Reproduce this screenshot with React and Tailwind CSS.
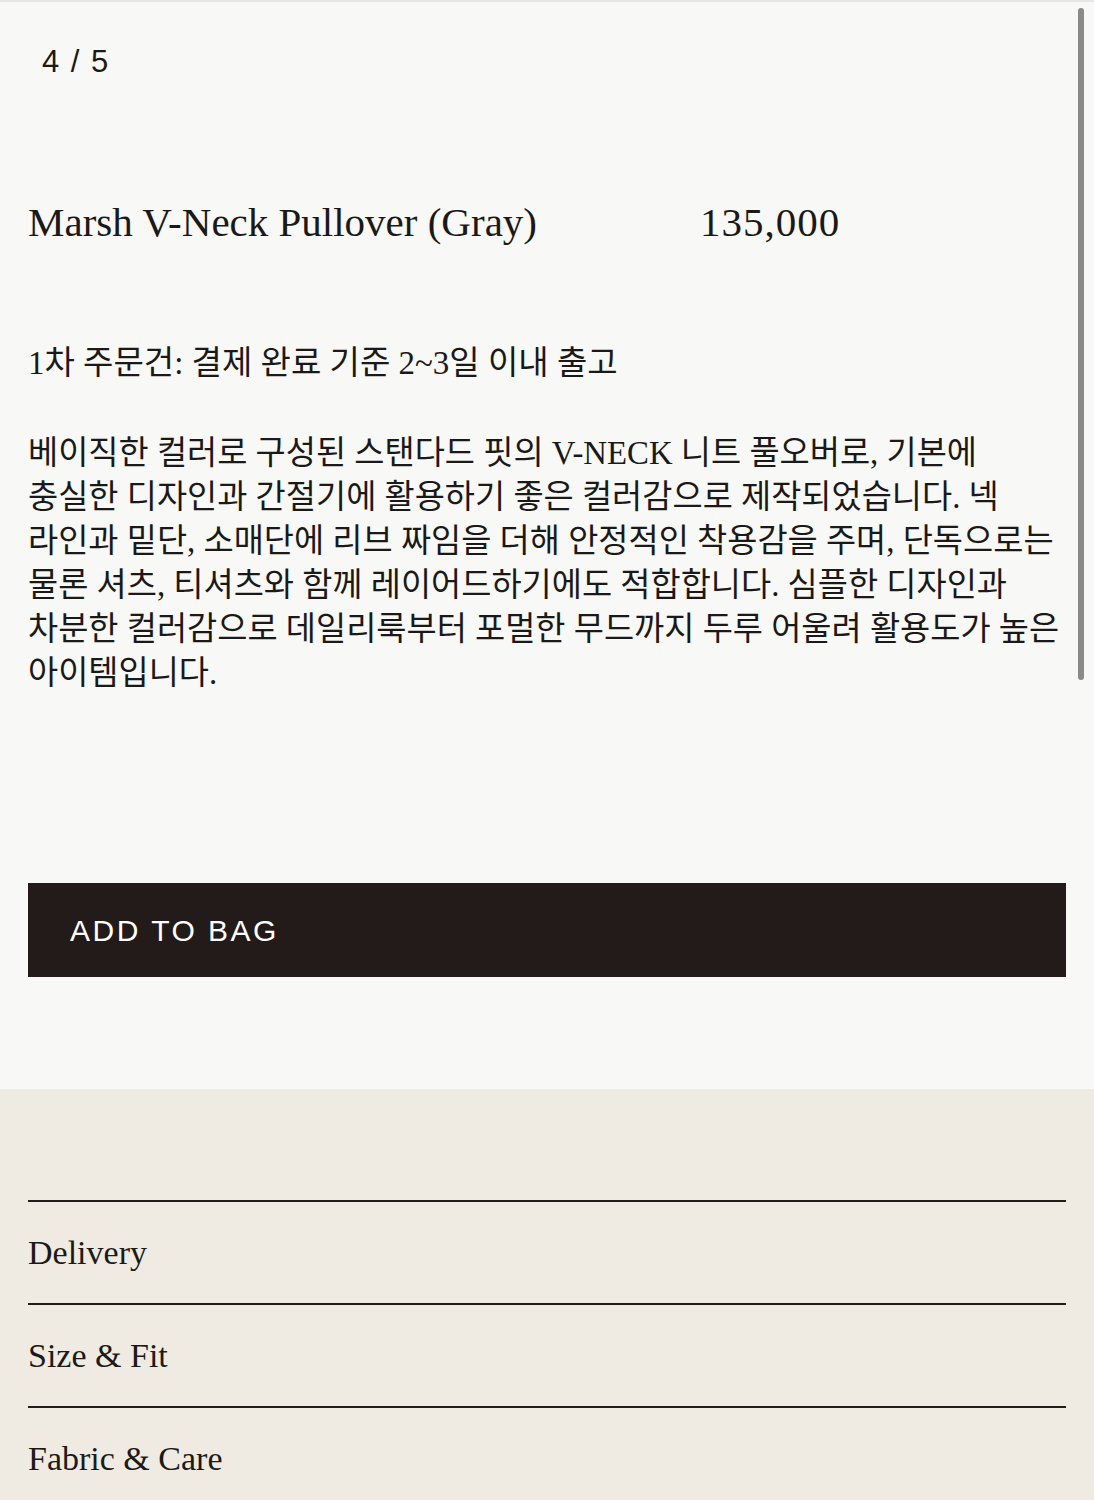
import React from 'react'

const serif = { fontFamily: '"Liberation Serif", "Noto Sans CJK KR", serif' }
const sans = { fontFamily: '"Liberation Sans", Arial, sans-serif' }

const description = [
  '베이직한 컬러로 구성된 스탠다드 핏의 V-NECK 니트 풀오버로, 기본에',
  '충실한 디자인과 간절기에 활용하기 좋은 컬러감으로 제작되었습니다. 넥',
  '라인과 밑단, 소매단에 리브 짜임을 더해 안정적인 착용감을 주며, 단독으로는',
  '물론 셔츠, 티셔츠와 함께 레이어드하기에도 적합합니다. 심플한 디자인과',
  '차분한 컬러감으로 데일리룩부터 포멀한 무드까지 두루 어울려 활용도가 높은',
  '아이템입니다.',
]

function AccordionRow({ label }) {
  return (
    <div className="border-t-2 border-[#221d19] h-[103px] flex items-center">
      <span className="text-[34px] leading-none text-[#1c1a17]" style={serif}>{label}</span>
    </div>
  )
}

export default function App() {
  return (
    <div className="relative min-h-[1500px] bg-[#f8f8f6] text-[#1b1917] overflow-hidden">
      <div className="h-[2px] bg-[#e6e6e4]"></div>

      {/* overlay scrollbar */}
      <div className="absolute right-[10px] top-[8px] w-[6px] h-[672px] rounded-full bg-[#8a8a8a]"></div>

      <div className="px-[28px]">
        <div className="pl-[14px] pt-[40px] text-[31px] leading-[40px] tracking-[1.5px]" style={sans}>
          4 / 5
        </div>

        <div className="mt-[116px] flex items-center h-[48px]" style={serif}>
          <h1 className="w-[672px] text-[41px] leading-[48px] font-normal">Marsh V-Neck Pullover (Gray)</h1>
          <span className="text-[41px] leading-[48px] tracking-[1px]">135,000</span>
        </div>

        <p className="mt-[95px] text-[33px] leading-[44px] whitespace-nowrap" style={serif}>
          1차 주문건: 결제 완료 기준 2~3일 이내 출고
        </p>

        <div className="mt-[46px] text-[32.8px] leading-[44px]" style={serif}>
          {description.map((line) => (
            <div key={line} className="whitespace-nowrap">{line}</div>
          ))}
        </div>

        <button className="mt-[188px] w-full h-[94px] bg-[#231b19] text-white text-left pl-[42px] text-[30px] tracking-[2.5px]" style={sans}>
          ADD TO BAG
        </button>
      </div>

      <div className="mt-[112px] bg-[#f0ebe2] px-[28px] pt-[111px]">
        <AccordionRow label="Delivery" />
        <AccordionRow label="Size & Fit" />
        <AccordionRow label="Fabric & Care" />
      </div>
    </div>
  )
}
